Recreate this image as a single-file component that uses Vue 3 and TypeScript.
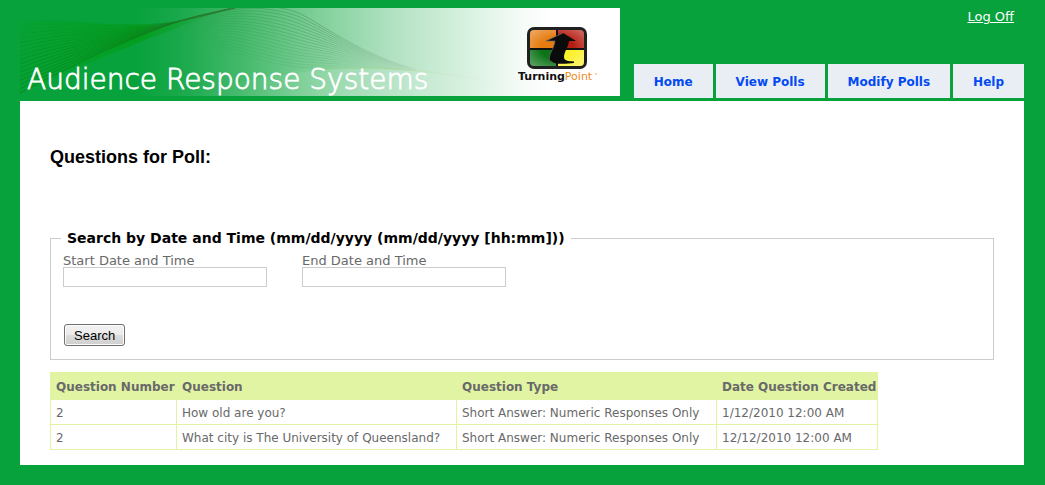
<script setup lang="ts">
import { ref } from 'vue'

interface Question {
  number: number
  text: string
  type: string
  created: string
}

const navItems: string[] = ['Home', 'View Polls', 'Modify Polls', 'Help']

const questions: Question[] = [
  { number: 2, text: 'How old are you?', type: 'Short Answer: Numeric Responses Only', created: '1/12/2010 12:00 AM' },
  { number: 2, text: 'What city is The University of Queensland?', type: 'Short Answer: Numeric Responses Only', created: '12/12/2010 12:00 AM' },
]

const startDate = ref('')
const endDate = ref('')

const LINES = 18
const mix = (a: number, b: number, t: number): number => Math.round((a + (b - a) * t) * 10) / 10
const steps = Array.from({ length: LINES }, (_, i) => i / (LINES - 1))

// Lines sweeping up from the left edge into the crest of the wave.
const leftWaves = steps.map((t) => ({
  d: `M0 ${mix(85, 14, t)} C${mix(50, 45, t)} ${mix(58, 10, t)} ${mix(85, 85, t)} ${mix(42, 19, t)} 130 ${mix(24, 16, t)} S185 7 222 -2`,
  opacity: mix(0.75, 0.05, t),
}))

// Lines fanning down from the crest towards the right.
const rightWaves = steps.map((t) => ({
  d: `M150 ${mix(16, 28, t)} C${mix(180, 165, t)} ${mix(8, 32, t)} ${mix(215, 190, t)} ${mix(-5, 38, t)} ${mix(245, 215, t)} ${mix(-2, 45, t)} S${mix(280, 265, t)} ${mix(5, 60, t)} 300 ${mix(17, 60, t)} S355 ${mix(51, 61, t)} 400 ${mix(62, 63, t)}`,
  opacity: mix(1, 0.3, t),
}))
</script>

<template>
  <div class="page">
    <header class="header">
      <svg class="banner" viewBox="0 0 600 88" role="img" aria-label="Audience Response Systems, TurningPoint">
        <defs>
          <linearGradient id="fade" gradientUnits="userSpaceOnUse" x1="115" y1="20" x2="535" y2="20">
            <stop offset="0" stop-color="#07a23c" />
            <stop offset="0.1" stop-color="#18a84a" />
            <stop offset="0.25" stop-color="#42b96a" />
            <stop offset="0.44" stop-color="#80d09a" />
            <stop offset="0.6" stop-color="#aee0bf" />
            <stop offset="0.8" stop-color="#daf2e2" />
            <stop offset="0.92" stop-color="#f5fbf7" />
            <stop offset="1" stop-color="#ffffff" />
          </linearGradient>
          <linearGradient id="crest" gradientUnits="userSpaceOnUse" x1="0" y1="0" x2="222" y2="0">
            <stop offset="0" stop-color="#047a12" />
            <stop offset="0.5" stop-color="#0a7a14" />
            <stop offset="1" stop-color="#2f7a3a" />
          </linearGradient>
          <linearGradient id="fan" gradientUnits="userSpaceOnUse" x1="150" y1="0" x2="400" y2="0">
            <stop offset="0" stop-color="#2f8a3a" stop-opacity="0" />
            <stop offset="0.25" stop-color="#2f8a3a" stop-opacity="0.4" />
            <stop offset="0.6" stop-color="#4f8f5f" stop-opacity="0.6" />
            <stop offset="1" stop-color="#8fb78f" stop-opacity="0" />
          </linearGradient>
          <linearGradient id="glow" gradientUnits="userSpaceOnUse" x1="0" y1="0" x2="200" y2="0">
            <stop offset="0" stop-color="#00a010" stop-opacity="0.15" />
            <stop offset="0.6" stop-color="#009a08" stop-opacity="0.55" />
            <stop offset="1" stop-color="#009a08" stop-opacity="0" />
          </linearGradient>
          <linearGradient id="hill" gradientUnits="userSpaceOnUse" x1="180" y1="0" x2="480" y2="0">
            <stop offset="0" stop-color="#fff" stop-opacity="0" />
            <stop offset="0.5" stop-color="#fff" stop-opacity="0.14" />
            <stop offset="1" stop-color="#fff" stop-opacity="0" />
          </linearGradient>
          <linearGradient id="rim" gradientUnits="userSpaceOnUse" x1="260" y1="0" x2="480" y2="0">
            <stop offset="0" stop-color="#a6d88c" stop-opacity="0" />
            <stop offset="0.5" stop-color="#a6d88c" stop-opacity="0.6" />
            <stop offset="1" stop-color="#e0e8c8" stop-opacity="0" />
          </linearGradient>
          <radialGradient id="shine" cx="0.5" cy="0.5" r="0.75">
            <stop offset="0.4" stop-color="#fff" stop-opacity="0" />
            <stop offset="1" stop-color="#fff" stop-opacity="0.4" />
          </radialGradient>
          <clipPath id="screen"><rect x="510" y="22" width="54" height="36" rx="4" /></clipPath>
        </defs>

        <rect width="600" height="88" fill="url(#fade)" />
        <path d="M0 14C45 10 85 19 130 16S185 7 222 -2C170 12 70 54 0 85Z" fill="url(#glow)" />
        <path d="M180 88C230 67 300 60 360 60S450 70 500 88Z" fill="url(#hill)" />
        <path d="M260 65C300 60 330 59 360 60S450 68 500 80" fill="none" stroke="url(#rim)" stroke-width="1.5" />
        <g fill="none" stroke="url(#crest)" stroke-width="0.8">
          <path v-for="(w, i) in leftWaves" :key="i" :d="w.d" :stroke-opacity="w.opacity" />
        </g>
        <g fill="none" stroke="url(#fan)" stroke-width="0.9">
          <path v-for="(w, i) in rightWaves" :key="i" :d="w.d" :stroke-opacity="w.opacity" />
        </g>
        <text class="banner-title" x="7" y="81">Audience Response Systems</text>

        <rect x="507" y="19" width="60" height="42" rx="7" fill="#202020" />
        <g clip-path="url(#screen)">
          <rect x="510" y="22" width="26" height="18" fill="#e67c10" />
          <rect x="538" y="22" width="26" height="18" fill="#b51c10" />
          <rect x="510" y="42" width="26" height="17" fill="#0b7416" />
          <rect x="538" y="42" width="26" height="17" fill="#fbf12c" />
          <rect x="510" y="22" width="54" height="36" fill="url(#shine)" />
          <path d="M536 22h2v36h-2zM510 40h54v2h-54z" fill="#111" />
        </g>
        <path d="M543 25L556 33H549C548 40 544 44 544 49C544 53 548 53 554 53.500L554 55C545 56 533 57 529.500 52C528 47 534 41 535 33H526Z" fill="#0b0b0b" />
        <path d="M543 25L526 33H535C534 41 528 47 529.500 52C531 54 533 55 535 56" fill="none" stroke="#686868" stroke-width="0.7" />
        <text class="logo-text" x="498" y="72"><tspan class="logo-bold">Turning</tspan><tspan class="logo-light">Point</tspan></text>
        <circle cx="576" cy="66" r="0.7" fill="#ee8a1d" />
      </svg>

      <div class="header-side">
        <a class="log-off" href="#">Log Off</a>
        <nav class="nav" aria-label="Main">
          <a v-for="item in navItems" :key="item" class="nav-link" href="#">{{ item }}</a>
        </nav>
      </div>
    </header>

    <main class="content">
      <h1 class="title">Questions for Poll:</h1>

      <form @submit.prevent>
        <fieldset class="search">
          <legend class="legend">Search by Date and Time (mm/dd/yyyy (mm/dd/yyyy [hh:mm]))</legend>
          <div class="fields">
            <div class="field">
              <label for="start-date">Start Date and Time</label>
              <input id="start-date" v-model="startDate" type="text" />
            </div>
            <div class="field">
              <label for="end-date">End Date and Time</label>
              <input id="end-date" v-model="endDate" type="text" />
            </div>
          </div>
          <button class="search-button" type="submit">Search</button>
        </fieldset>
      </form>

      <table class="questions">
        <colgroup>
          <col class="col-number" />
          <col class="col-question" />
          <col class="col-type" />
          <col class="col-date" />
        </colgroup>
        <thead>
          <tr>
            <th scope="col">Question Number</th>
            <th scope="col">Question</th>
            <th scope="col">Question Type</th>
            <th scope="col">Date Question Created</th>
          </tr>
        </thead>
        <tbody>
          <tr v-for="(q, i) in questions" :key="i">
            <td>{{ q.number }}</td>
            <td>{{ q.text }}</td>
            <td>{{ q.type }}</td>
            <td>{{ q.created }}</td>
          </tr>
        </tbody>
      </table>
    </main>
  </div>
</template>

<style>
body {
  background: #07a23c;
}
</style>

<style scoped>
.page {
  padding: 8px 21px 20px 20px;
  font-family: Verdana, 'DejaVu Sans', sans-serif;
  font-size: 13px;
  line-height: 15px;
  color: #696969;
}

.header {
  display: flex;
  justify-content: space-between;
  align-items: stretch;
  padding-bottom: 3px;
}

.banner {
  display: block;
  flex: none;
  width: 600px;
  height: 88px;
}

.banner-title {
  font-family: 'DejaVu Sans', sans-serif;
  font-weight: 200;
  font-size: 28px;
  fill: #fff;
  stroke: #fff;
  stroke-width: 0.8px;
}

.logo-text {
  font-family: 'DejaVu Sans', sans-serif;
  font-size: 11px;
}

.logo-bold {
  font-weight: 700;
  fill: #111;
}

.logo-light {
  fill: #ee8a1d;
}

.header-side {
  display: flex;
  flex-direction: column;
  justify-content: space-between;
  align-items: flex-end;
  height: 90px;
}

.log-off {
  margin-right: 10px;
  padding-top: 1px;
  color: #fff;
}

.nav {
  display: flex;
  gap: 3px;
}

.nav-link {
  padding: 2px 20px 0;
  background: #e8eef4;
  color: #034af3;
  font-size: 12px;
  font-weight: 700;
  line-height: 32px;
  text-decoration: none;
  white-space: nowrap;
}

.content {
  padding: 46px 30px 15px;
  background: #fff;
}

.title {
  margin: 0 0 64px;
  color: #000;
  font-family: Arial, 'Liberation Sans', sans-serif;
  font-size: 18px;
  line-height: 20px;
}

.search {
  margin: 0 0 12px;
  padding: 8px 12px 13px;
  border: 1px solid #ccc;
}

.legend {
  margin-left: -2px;
  padding: 0 6px;
  color: #000;
  font-size: 14px;
  font-weight: 700;
}

.fields {
  display: flex;
  gap: 35px;
  margin-bottom: 37px;
}

.field {
  display: flex;
  flex-direction: column;
  line-height: 13px;
}

.field input {
  box-sizing: border-box;
  width: 204px;
  height: 20px;
  margin: 0;
  padding: 1px 2px;
  border: 1px solid #ccc;
  font: inherit;
}

.search-button {
  display: block;
  height: 22px;
  margin-left: 1px;
  padding: 0 9px;
  border: 1px solid #707070;
  border-radius: 3px;
  background: linear-gradient(#f2f2f2 0%, #ebebeb 50%, #dddddd 50%, #cfcfcf 100%);
  box-shadow: inset 0 0 0 1px #fcfcfc;
  color: #000;
  font-family: Arial, 'Liberation Sans', sans-serif;
  font-size: 13px;
}

.questions {
  border-collapse: collapse;
  font-size: 12px;
}

.col-number {
  width: 126px;
}

.col-question {
  width: 280px;
}

.col-type {
  width: 260px;
}

.col-date {
  width: 161px;
}

.questions th,
.questions td {
  padding: 6px 1px 4px 5px;
  border: 1px solid #e0f4a4;
  line-height: 14px;
  text-align: left;
  white-space: nowrap;
}

.questions th {
  padding-top: 7px;
  padding-bottom: 5px;
  background: #e0f4a4;
}
</style>
